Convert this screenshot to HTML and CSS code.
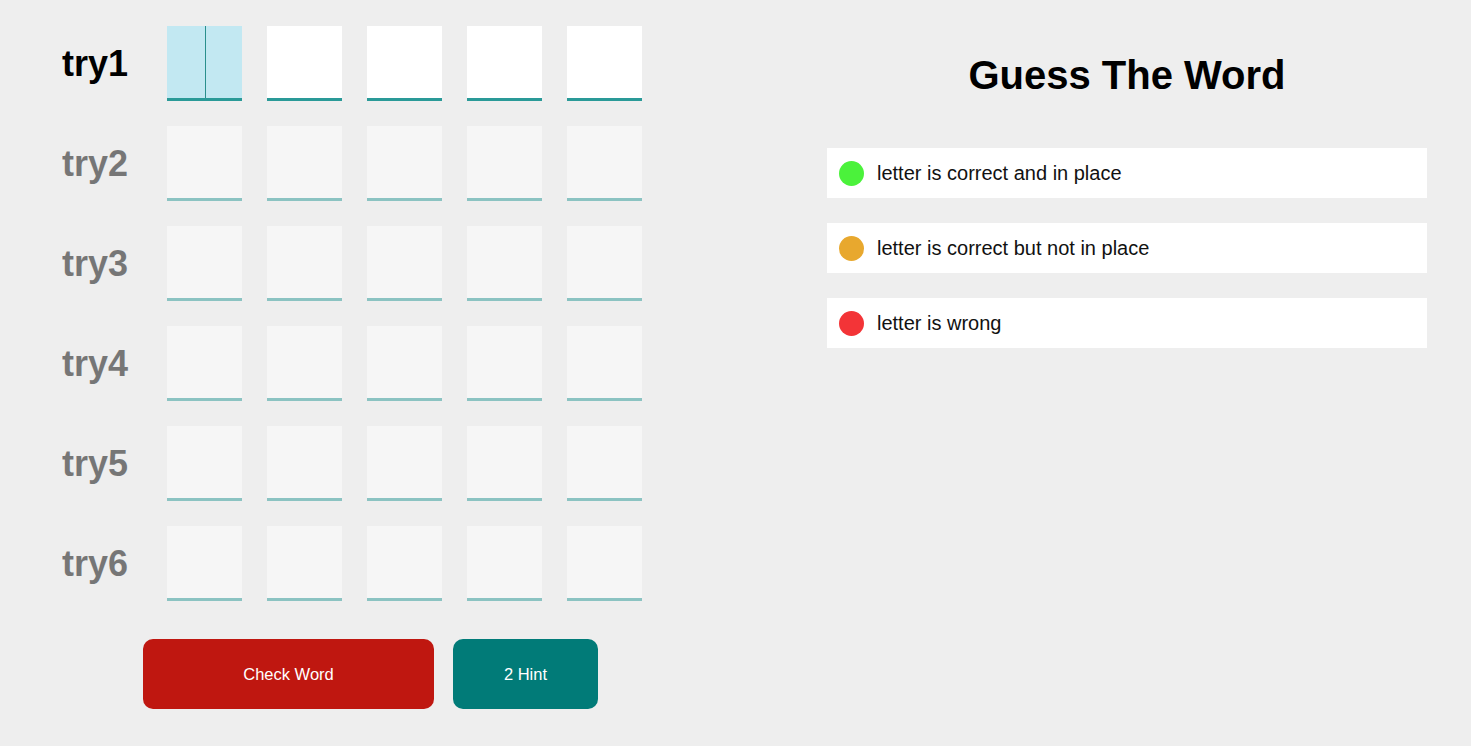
FILE: index.html
```html
<!DOCTYPE html>
<html lang="en">
<head>
<meta charset="utf-8">
<title>Guess The Word</title>
<link rel="stylesheet" href="styles.css">
</head>
<body>
<main class="game">
  <section class="board">
    <div class="row">
      <span class="label">try1</span>
      <div class="cell focused"><span class="caret"></span></div>
      <div class="cell"></div>
      <div class="cell"></div>
      <div class="cell"></div>
      <div class="cell"></div>
    </div>
    <div class="row disabled">
      <span class="label">try2</span>
      <div class="cell"></div><div class="cell"></div><div class="cell"></div><div class="cell"></div><div class="cell"></div>
    </div>
    <div class="row disabled">
      <span class="label">try3</span>
      <div class="cell"></div><div class="cell"></div><div class="cell"></div><div class="cell"></div><div class="cell"></div>
    </div>
    <div class="row disabled">
      <span class="label">try4</span>
      <div class="cell"></div><div class="cell"></div><div class="cell"></div><div class="cell"></div><div class="cell"></div>
    </div>
    <div class="row disabled">
      <span class="label">try5</span>
      <div class="cell"></div><div class="cell"></div><div class="cell"></div><div class="cell"></div><div class="cell"></div>
    </div>
    <div class="row disabled">
      <span class="label">try6</span>
      <div class="cell"></div><div class="cell"></div><div class="cell"></div><div class="cell"></div><div class="cell"></div>
    </div>
    <div class="actions">
      <button class="btn check">Check Word</button>
      <button class="btn hint">2 Hint</button>
    </div>
  </section>
  <aside class="panel">
    <h1 class="title">Guess The Word</h1>
    <div class="legend">
      <div class="legend-item"><span class="dot green"></span><span>letter is correct and in place</span></div>
      <div class="legend-item"><span class="dot orange"></span><span>letter is correct but not in place</span></div>
      <div class="legend-item"><span class="dot red"></span><span>letter is wrong</span></div>
    </div>
  </aside>
</main>
</body>
</html>
```

FILE: styles.css
```css
* { box-sizing: border-box; }
html, body { margin: 0; height: 100%; }
body {
  background: #eeeeee;
  font-family: "Liberation Sans", Arial, sans-serif;
  color: #000;
}
.game {
  display: flex;
  align-items: flex-start;
  padding-top: 26px;
}
.board {
  padding-left: 62px;
}
.row {
  display: flex;
  align-items: center;
  gap: 25px;
  margin-bottom: 25px;
}
.row.disabled { opacity: 0.5; }
.label {
  width: 80px;
  font-size: 36px;
  font-weight: bold;
}
.cell {
  position: relative;
  width: 75px;
  height: 75px;
  background: #ffffff;
  border-bottom: 3px solid #2a9a98;
}
.cell.focused { background: #c2e8f2; }
.caret {
  position: absolute;
  left: 38px;
  top: 0;
  bottom: 0;
  width: 1px;
  background: #2a8f8d;
}
.actions {
  display: flex;
  gap: 19px;
  margin-top: 38px;
  padding-left: 81px;
}
.btn {
  height: 70px;
  border: none;
  border-radius: 10px;
  color: #fff;
  font-family: "Liberation Sans", Arial, sans-serif;
  font-size: 16.5px;
}
.check { width: 291px; background: #bf1710; }
.hint { width: 145px; background: #017b78; }
.panel {
  margin-left: 185px;
  width: 600px;
}
.title {
  margin: 26px 0 50px;
  font-size: 40px;
  line-height: 46px;
  text-align: center;
}
.legend {
  display: flex;
  flex-direction: column;
  gap: 25px;
}
.legend-item {
  display: flex;
  align-items: center;
  gap: 13px;
  height: 50px;
  padding: 0 12px;
  background: #fff;
  font-size: 20px;
  line-height: 23px;
  color: #111;
}
.dot {
  width: 25px;
  height: 25px;
  border-radius: 50%;
}
.green { background: #4bf23b; }
.orange { background: #e8a82e; }
.red { background: #f33437; }
```
